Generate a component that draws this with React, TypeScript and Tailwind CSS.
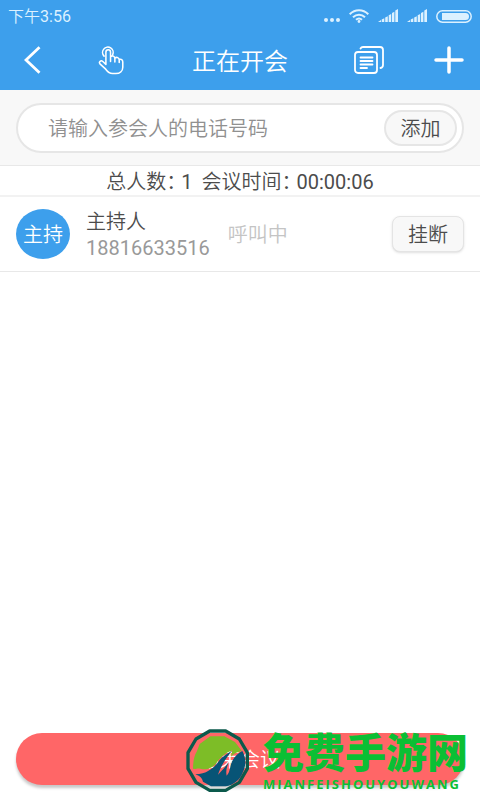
import React, { useState } from "react";

const SignalIcon = () => (
  <svg width="20" height="14" viewBox="0 0 20 14" fill="currentColor">
    <path d="M0 13L3 11V13ZM3.700 10.500L6.300 9.300V13H3.700ZM7.200 8.500L9.800 7.300V13H7.200ZM10.700 6.300L13.200 5V13H10.700ZM14 4L16.400 2.800V13H14ZM17.300 1.500L20 0V13H17.300Z" />
  </svg>
);

const StatusBar = () => (
  <div className="flex h-[30px] items-center justify-between px-2 pt-0.5 text-[#dcf1ff]">
    <span className="pt-0.5 text-base">下午<span className="font-normal">3:56</span></span>
    <div className="flex items-center gap-[9px]">
      <svg width="16" height="14" viewBox="0 0 16 14" fill="currentColor">
        <circle cx="2" cy="11" r="2" />
        <circle cx="8" cy="11" r="2" />
        <circle cx="14" cy="11" r="2" />
      </svg>
      <svg width="20" height="14" viewBox="0 0 20 14" fill="none" stroke="currentColor" strokeWidth="2">
        <path d="M0.700 5.200C6 -0.200 14 -0.200 19.300 5.200M4 8.200C7.500 4.800 12.500 4.800 16 8.200M7 10.800C9 9 11 9 13 10.800" />
        <circle cx="10" cy="12.500" r="1.400" fill="currentColor" stroke="none" />
      </svg>
      <SignalIcon />
      <SignalIcon />
      <svg width="36" height="13" viewBox="0 0 36 13">
        <rect x="0.800" y="0.800" width="34.400" height="11.400" rx="5.700" fill="none" stroke="currentColor" strokeWidth="1.500" />
        <path d="M6 3H29.500A3.500 3.500 0 0 1 29.500 10H6Z" fill="currentColor" />
      </svg>
    </div>
  </div>
);

const NavBar = () => (
  <nav className="grid h-[60px] grid-cols-[1fr_auto_1fr] items-center px-4 text-white">
    <div className="flex items-center gap-14 pl-2">
      <button type="button" aria-label="返回">
        <svg width="18" height="28" viewBox="0 0 18 28" fill="none" stroke="currentColor" strokeWidth="2.800">
          <path d="M15.500 1.200L2 14L15.500 26.800" />
        </svg>
      </button>
      <button type="button" aria-label="举手">
        <svg width="27" height="29" viewBox="0 0 28 30" fill="none" stroke="currentColor" strokeWidth="1.600" strokeLinecap="round" strokeLinejoin="round">
          <path d="M6.300 10.500A5.500 5.500 0 1 1 15.200 9" />
          <path d="M8.200 19V6.500C8.200 3 13 3 13 6.500V16M13 11C15 9.300 17.500 10.500 17.500 13V16.500M17.500 12.500C19.500 11 22 12 22 14.500V17M22 14C24 13 25.700 14.200 25.700 16.500V22C25.700 26 22.500 28.500 18.500 28.500H15C11.500 28.500 9.800 26.500 8 24L2 18.500C0.500 16.500 3 14.200 5 16L8.200 19" />
        </svg>
      </button>
    </div>
    <h1 className="pt-1 text-2xl">正在开会</h1>
    <div className="flex items-center justify-end gap-[50px]">
      <button type="button" aria-label="记录">
        <svg width="30" height="28" viewBox="0 0 30 28" fill="none" stroke="currentColor" strokeWidth="1.800" strokeLinecap="round">
          <rect x="1" y="6" width="22" height="21" rx="3" />
          <path d="M6.500 2.500Q7.300 1 9 1H26Q29 1 29 4V19Q29 21.500 26.500 22M6.500 11.500H18.500M6.500 15H18.500M6.500 18.500H18.500M6.500 22H13" />
        </svg>
      </button>
      <button type="button" aria-label="新增">
        <svg width="30" height="28" viewBox="0 0 30 28" fill="none" stroke="currentColor" strokeWidth="3.500" strokeLinecap="round">
          <path d="M2 14H28M15 2V26" />
        </svg>
      </button>
    </div>
  </nav>
);

const Watermark = () => (
  <div className="pointer-events-none absolute bottom-[6px] right-3 flex items-center gap-3">
    <svg width="66" height="66" viewBox="14 24 198 198">
      <path d="M38 146C38 125 42 105 49 95L58 72L90 49H132L164 66L184 92C165 98 160 102 152 110L156 91C138 97 120 112 109 128C98 143 78 152 60 146C50 143 46 150 38 146Z" fill="#7dbd27" />
      <path d="M45 163C80 163 103 142 118 120C128 108 142 100 155 92C141 108 120 140 113 164C127 150 136 139 145 126C139 143 136 154 139 167C149 157 148 145 153 130C160 112 171 101 186 93C196 110 199 137 187 158C180 178 160 195 136 199H92L68 185C65 173 58 168 45 163Z" fill="#075476" />
      <path d="M88 33H136L177 57L201 98V146L177 187L136 211H88L47 187L23 146V98L47 57Z" fill="none" stroke="#0c5a4c" strokeWidth="10" strokeLinejoin="round" />
    </svg>
    <div className="flex flex-col text-[#0bbf34]">
      <span className="text-[41px] font-black leading-[46px]">免费手游网</span>
      <span className="font-['Open_Sans',sans-serif] text-[13px] font-bold leading-[14px] tracking-[2px]">MIANFEISHOUYOUWANG</span>
    </div>
  </div>
);

const App: React.FC = () => {
  const [phone, setPhone] = useState("");

  return (
    <div className="relative flex min-h-screen flex-col bg-white font-[Roboto,'Noto_Sans_CJK_SC',sans-serif] text-xl font-[350] text-[#4c4c4c]">
      <header className="bg-[#3d9fec]">
        <StatusBar />
        <NavBar />
      </header>

      <form className="border-b border-[#e8e8e8] bg-[#f8f8f8] px-4 pb-3 pt-[13px]" onSubmit={(e) => e.preventDefault()}>
        <div className="flex h-[50px] items-center rounded-full border-2 border-[#e6e6e6] bg-white pl-[30px] pr-[5px]">
          <input
            type="tel"
            aria-label="电话号码"
            className="min-w-0 flex-1 pt-0.5 outline-none placeholder:text-[#909090]"
            placeholder="请输入参会人的电话号码"
            value={phone}
            onChange={(e) => setPhone(e.target.value)}
          />
          <button type="submit" className="h-9 w-[73px] rounded-full border-2 border-[#e6e6e6] bg-[#f8f8f8] pt-0.5">添加</button>
        </div>
      </form>

      <main className="flex-1">
        <div className="flex h-[31px] items-center justify-center gap-[5px] border-b-2 border-[#f2f2f2] pt-0.5 [font-feature-settings:'halt']">
          <span>总人数：</span>
          <span className="font-normal">1</span>
          <span className="ml-1">会议时间：</span>
          <span className="font-normal">00:00:06</span>
        </div>
        <div className="flex h-[75px] items-center border-b border-[#e8e8e8] px-4">
          <div className="flex h-[50px] w-[54px] items-center justify-center rounded-[50%] bg-[#3d9fec] pt-0.5 text-white">主持</div>
          <div className="ml-4 flex flex-col pt-0.5 leading-[26px]">
            <span>主持人</span>
            <span className="font-normal text-[#999]">18816633516</span>
          </div>
          <span className="ml-[18px] pt-0.5 text-[#c4c4c4]">呼叫中</span>
          <button type="button" className="ml-auto h-9 w-[72px] rounded-lg border border-[#e4e4e4] bg-[#f8f8f8] pt-0.5 shadow-sm">挂断</button>
        </div>
      </main>

      <footer className="px-4 pb-[15px]">
        <button type="button" className="h-[52px] w-full rounded-full bg-[#ff6667] pt-0.5 text-white shadow-[0_3px_3px_#c8c8c8]">结束会议</button>
      </footer>

      <Watermark />
    </div>
  );
};

export default App;
